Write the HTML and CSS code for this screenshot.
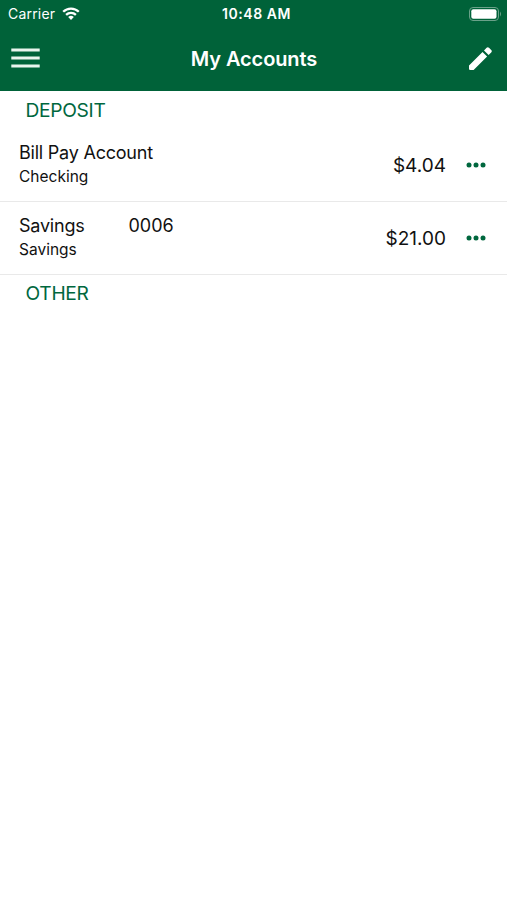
FILE: index.html
```html
<!DOCTYPE html>
<html lang="en">
<head>
<meta charset="utf-8">
<title>My Accounts</title>
<link rel="stylesheet" href="styles.css">
</head>
<body>
<header class="header">
  <div class="status">
    <div class="carrier"><span>Carrier</span>
      <svg class="wifi" viewBox="0 0 18 13" width="18" height="13"><g fill="none" stroke="#fff" stroke-width="2.3"><path d="M1.2 4.8a11 11 0 0 1 15.6 0"/><path d="M4.1 7.9a7 7 0 0 1 9.8 0"/></g><path d="M9 13L6.2 10.1a4 4 0 0 1 5.6 0z" fill="#fff"/></svg>
    </div>
    <div class="time">10:48 AM</div>
    <svg class="battery" viewBox="0 0 33 14" width="33" height="14"><rect x=".5" y=".5" width="29" height="13" rx="3.5" fill="none" stroke="#6aa189"/><rect x="2.3" y="2.3" width="25.2" height="9.4" rx="2" fill="#fff"/><path d="M31 4.5q2 2.5 0 5z" fill="#6aa189"/></svg>
  </div>
  <nav class="nav">
    <svg class="menu" viewBox="0 0 29 20" width="29" height="20"><path d="M.3 2h28.4M.3 10h28.4M.3 17.9h28.4" stroke="#e9f5ee" stroke-width="3"/></svg>
    <h1 class="title">My Accounts</h1>
    <svg class="edit" viewBox="0 0 23 23" width="23" height="23"><path fill="#fff" d="M0 18.4L13.5 4.9l4.6 4.6L4.6 23H1.3Q0 23 0 21.7zM15 3.4L17.6.8q1.2-1.1 2.4 0l2.2 2.2q1.2 1.2 0 2.4l-2.6 2.6z"/></svg>
  </nav>
</header>
<main>
  <h2 class="section">DEPOSIT</h2>
  <div class="row">
    <div class="info"><div class="name"><span class="label">Bill Pay Account</span></div><div class="type">Checking</div></div>
    <div class="amount">$4.04</div>
    <svg class="more" viewBox="0 0 20 6" width="20" height="6"><g fill="#00673e"><circle cx="3" cy="3" r="2.5"/><circle cx="10" cy="3" r="2.5"/><circle cx="17" cy="3" r="2.5"/></g></svg>
  </div>
  <div class="row">
    <div class="info"><div class="name"><span class="label savings">Savings</span><span class="number">0006</span></div><div class="type">Savings</div></div>
    <div class="amount">$21.00</div>
    <svg class="more" viewBox="0 0 20 6" width="20" height="6"><g fill="#00673e"><circle cx="3" cy="3" r="2.5"/><circle cx="10" cy="3" r="2.5"/><circle cx="17" cy="3" r="2.5"/></g></svg>
  </div>
  <h2 class="section other">OTHER</h2>
</main>
</body>
</html>
```

FILE: styles.css
```css
* { box-sizing: border-box; }
body { margin: 0; background: #fff; color: #111; font-family: Inter, sans-serif; }
svg { display: block; flex: none; }
.header { height: 91px; background: #006239; color: #fff; }
.status { height: 27px; display: grid; grid-template-columns: 1fr auto 1fr; align-items: center; padding: 0 5px 0 8px; font-size: 14px; }
.carrier { display: flex; align-items: center; gap: 7px; letter-spacing: .2px; }
.time { font-weight: 600; letter-spacing: .55px; padding-left: 3px; }
.battery { justify-self: end; }
.nav { height: 64px; display: grid; grid-template-columns: 1fr auto 1fr; align-items: center; padding: 0 15px 2px 11px; }
.title { margin: 0; padding: 2px 0 0 5px; font-size: 20px; font-weight: 600; letter-spacing: -.1px; }
.edit { justify-self: end; }
.section { margin: 0; height: 38px; padding-left: 25.5px; line-height: 38px; font-size: 19.2px; font-weight: 400; letter-spacing: -.3px; color: #00673e; }
.other { line-height: 36px; }
.row { height: 73px; display: flex; align-items: center; padding: 0 21px 0 19px; border-bottom: 1px solid #e9e9e9; }
.info { flex: 1; padding-bottom: 2px; }
.name { display: flex; font-size: 18px; line-height: 24px; }
.label { letter-spacing: -.22px; }
.savings { width: 109.5px; }
.type { font-size: 15.5px; line-height: 23px; }
.amount { font-size: 19px; margin-right: 20px; }
```
